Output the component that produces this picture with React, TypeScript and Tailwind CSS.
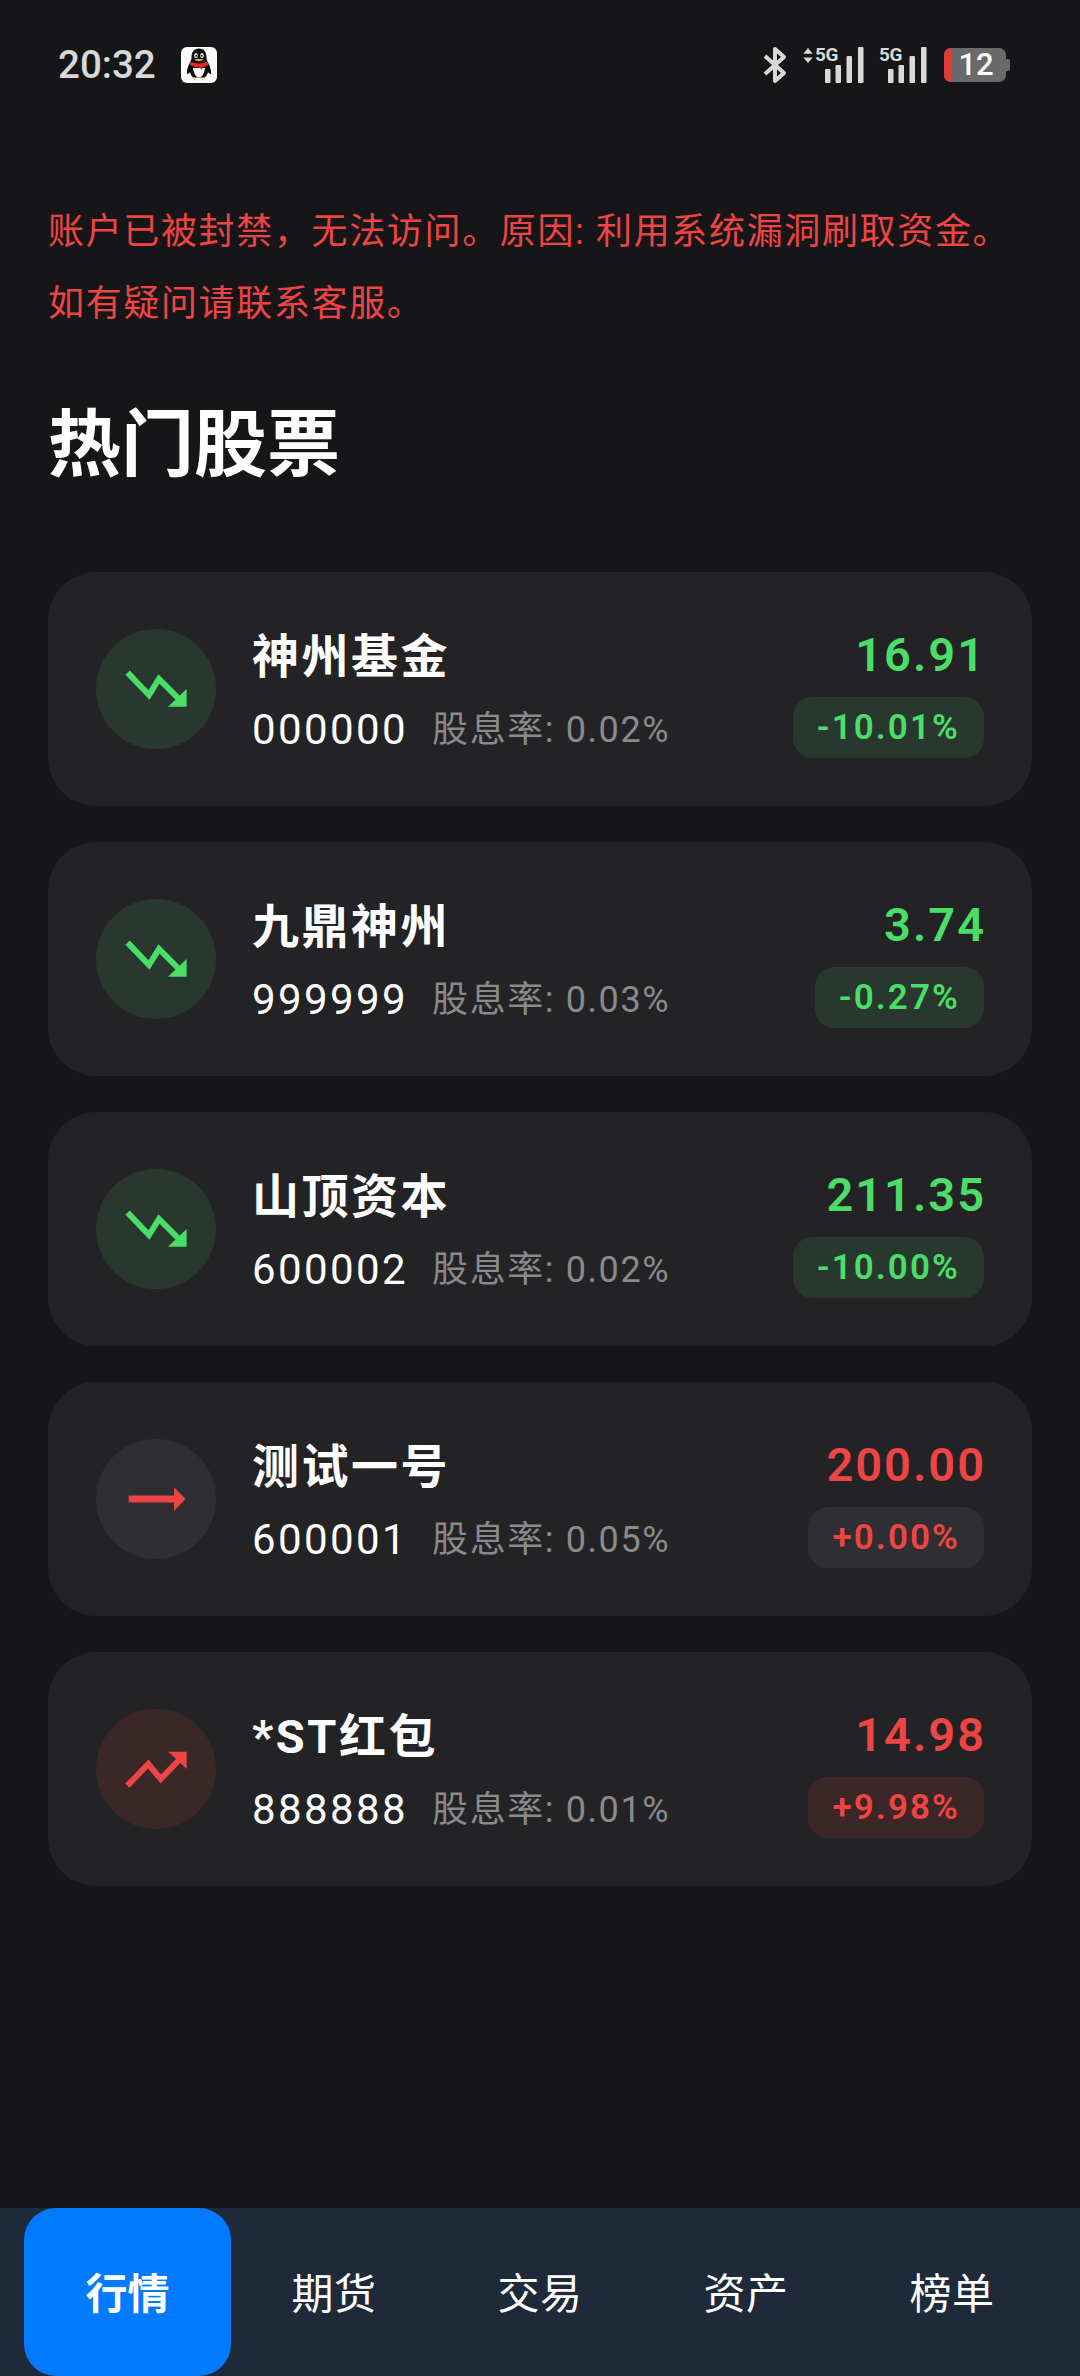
import React from "react";

type Stock = {
	name: string;
	code: string;
	rate: string;
	price: string;
	change: string;
	trend: "up" | "down" | "flat";
};

const stocks: Stock[] = [
	{ name: "神州基金", code: "000000", rate: "0.02%", price: "16.91", change: "-10.01%", trend: "down" },
	{ name: "九鼎神州", code: "999999", rate: "0.03%", price: "3.74", change: "-0.27%", trend: "down" },
	{ name: "山顶资本", code: "600002", rate: "0.02%", price: "211.35", change: "-10.00%", trend: "down" },
	{ name: "测试一号", code: "600001", rate: "0.05%", price: "200.00", change: "+0.00%", trend: "flat" },
	{ name: "*ST红包", code: "888888", rate: "0.01%", price: "14.98", change: "+9.98%", trend: "up" },
];

const tabs = ["行情", "期货", "交易", "资产", "榜单"];

function TrendIcon({ trend }: { trend: Stock["trend"] }) {
	if (trend === "down") {
		return (
			<svg viewBox="0 0 120 120" className="h-[120px] w-[120px]">
				<path d="M31.6 43.7 53 66 63 50 82 69" fill="none" stroke="#4ade68" strokeWidth="6" />
				<path d="M90.6 60V77.700H72Z" fill="#4ade68" />
			</svg>
		);
	}
	if (trend === "up") {
		return (
			<svg viewBox="0 0 120 120" className="h-[120px] w-[120px]">
				<path d="M31.3 76.700 52.300 55 64.700 70 84 50" fill="none" stroke="#ef4444" strokeWidth="6" />
				<path d="M72.300 42.700H90.700V60Z" fill="#ef4444" />
			</svg>
		);
	}
	return (
		<svg viewBox="0 0 120 120" className="h-[120px] w-[120px]">
			<path d="M32.700 60H80" fill="none" stroke="#ef4444" strokeWidth="7" />
			<path d="M78 48.300 89.700 60 78 72Z" fill="#ef4444" />
		</svg>
	);
}

function StockCard({ stock }: { stock: Stock }) {
	const green = stock.trend === "down";
	const tint = green ? "bg-[#29382e]" : stock.trend === "up" ? "bg-[#3b2728]" : "bg-[#2f2f33]";
	const color = green ? "text-[#4ade68]" : "text-[#ef4444]";

	return (
		<div className="flex h-[234px] items-center justify-between rounded-[48px] bg-[#232325] px-[48px]">
			<div className="flex items-center">
				<div className={`flex h-[120px] w-[120px] items-center justify-center rounded-full ${tint}`}>
					<TrendIcon trend={stock.trend} />
				</div>
				<div className="ml-[36px] flex flex-col pt-[6px]">
					<div className="text-[47px] leading-[60px] font-bold tracking-[2.500px] text-white">{stock.name}</div>
					<div className="mt-[15px] flex items-center leading-[56px]">
						<span className="text-[42px] font-normal tracking-[2.400px] text-white">{stock.code}</span>
						<span className="ml-[24px] text-[36px] font-normal tracking-[1.600px] text-[#8a8a8c]">股息率: {stock.rate}</span>
					</div>
				</div>
			</div>
			<div className="flex flex-col items-end pt-[4px]">
				<div className={`-mr-[2px] text-[47px] leading-[60px] font-semibold tracking-[2px] ${color}`}>{stock.price}</div>
				<div className={`mt-[12px] flex h-[61px] items-center rounded-[20px] px-[24px] pt-[3px] text-[35px] font-semibold tracking-[2.100px] ${tint} ${color}`}>
					{stock.change}
				</div>
			</div>
		</div>
	);
}

function QQIcon() {
	return (
		<svg viewBox="0 0 36 36" className="ml-[25px] h-[36px] w-[36px]">
			<rect width="36" height="36" rx="6" fill="#fff" />
			<path d="M18 1.500c-5 0-7.500 3.800-7.500 9 0 2-.5 3-1.300 4.500C7.500 18 5.500 23 6 27c1.500 0 2.500-1 3-2 .5 2 1.500 4 3 5.500h12c1.500-1.500 2.500-3.500 3-5.500 .5 1 1.500 2 3 2 .5-4-1.500-9-3.200-12-.8-1.500-1.300-2.500-1.300-4.500 0-5.200-2.500-9-7.500-9Z" fill="#0b0b0b" />
			<path d="M12 21c1 6 3 9.500 6 9.500s5-3.500 6-9.500Z" fill="#fff" />
			<path d="M9.500 14.500c5 2.500 12 2.500 17 0l1 3.500c-2 1.300-4 1.800-6 2l-.5 3-3-2.800c-3 0-6.500-.7-9-2.200Z" fill="#e0242a" />
			<ellipse cx="15" cy="8.500" rx="1.800" ry="2.500" fill="#fff" />
			<ellipse cx="21" cy="8.500" rx="1.800" ry="2.500" fill="#fff" />
			<circle cx="15.300" cy="8.800" r="1" fill="#000" />
			<circle cx="20.700" cy="8.800" r="1" fill="#000" />
			<path d="M13.500 12.500c3-1 6-1 9 0-1.500 2.200-7.500 2.200-9 0Z" fill="#f5a623" />
			<path d="M11 31.500h6l-3 1.500ZM19 31.500h6l-3 1.500Z" fill="#eec15a" />
		</svg>
	);
}

function Signal() {
	return (
		<svg viewBox="0 0 39 36" className="h-[36px] w-[39px]" fill="#d8d8d8">
			<rect x="0" y="22" width="5.500" height="14" rx="1" />
			<rect x="10.500" y="18" width="5.500" height="18" rx="1" />
			<rect x="21.500" y="9" width="5.500" height="27" rx="1" />
			<rect x="33" y="0" width="5.500" height="36" rx="1" />
		</svg>
	);
}

function StatusBar() {
	return (
		<div className="flex h-[130px] items-center pl-[58px]">
			<span className="text-[38.500px] font-medium text-[#d8d8d8]">20:32</span>
			<QQIcon />
			<div className="ml-auto flex items-center pr-[70px]">
				<svg viewBox="0 0 24 38" className="h-[38px] w-[24px]" fill="none" stroke="#d8d8d8" strokeWidth="4" strokeLinejoin="round">
					<path d="M2 10 21 27 12 35V3L21 11 2 28" />
				</svg>
				<div className="relative ml-[16px] h-[38px] w-[61px]">
					<svg viewBox="0 0 10 16" className="absolute top-[2px] left-[0px] h-[15px] w-[10px]" fill="#d8d8d8">
						<path d="M5 0 10 6H0ZM5 16 0 10H10Z" />
					</svg>
					<span className="absolute top-[-1px] left-[12px] text-[19px] leading-[20px] font-bold tracking-[-0.5px] text-[#d8d8d8]">5G</span>
					<div className="absolute top-[1px] left-[22px]"><Signal /></div>
				</div>
				<div className="relative ml-[15px] h-[38px] w-[48px]">
					<span className="absolute top-[-1px] left-[0px] text-[19px] leading-[20px] font-bold tracking-[-0.5px] text-[#d8d8d8]">5G</span>
					<div className="absolute top-[1px] left-[9px]"><Signal /></div>
				</div>
				<div className="ml-[17px] flex items-center">
					<div className="flex h-[34px] w-[62px] items-center rounded-[7px] bg-[#6a6a6c]">
						<div className="h-full w-[8px] rounded-l-[7px] bg-[#e53935]" />
						<span className="w-[48px] text-center text-[31px] leading-[34px] font-medium text-white">12</span>
					</div>
					<div className="h-[12px] w-[4px] rounded-r-[2px] bg-[#6a6a6c]" />
				</div>
			</div>
		</div>
	);
}

export default function App() {
	return (
		<div className="flex h-[2376px] w-[1080px] flex-col bg-[#161618] font-['Roboto','Noto_Sans_CJK_SC',sans-serif]">
			<StatusBar />
			<div className="px-[48px] pt-[66px] text-[36px] leading-[72px] tracking-[1.650px] text-[#ef4444]">
				<div>账户已被封禁，无法访问。原因: 利用系统漏洞刷取资金。</div>
				<div>如有疑问请联系客服。</div>
			</div>
			<h1 className="mt-[53px] pl-[48px] text-[73px] leading-[104px] font-bold text-white">热门股票</h1>
			<div className="mt-[75px] flex flex-1 flex-col gap-[36px] px-[48px]">
				{stocks.map((stock) => (
					<StockCard key={stock.code} stock={stock} />
				))}
			</div>
			<div className="flex h-[168px] items-stretch bg-[#1e2a3a] px-[24px]">
				{tabs.map((tab, i) => (
					<div
						key={tab}
						className={
							i === 0
								? "flex w-[207px] items-center justify-center rounded-[32px] bg-[#007aff] pt-[5px] text-[42px] font-bold text-white"
								: "flex w-[206px] items-center justify-center pt-[5px] text-[42px] tracking-[0.5px] text-white"
						}
					>
						{tab}
					</div>
				))}
			</div>
		</div>
	);
}
